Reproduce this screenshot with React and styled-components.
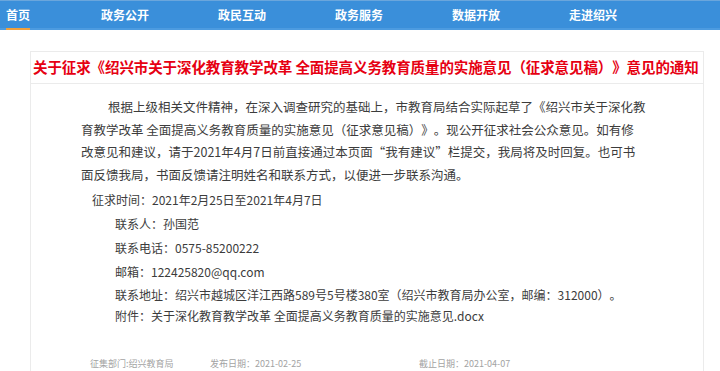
import React from 'react';
import styled, { createGlobalStyle } from 'styled-components';

const GlobalStyle = createGlobalStyle`
  html, body {
    margin: 0;
    padding: 0;
    background: #fff;
    overflow: hidden;
  }
  body {
    font-family: "Noto Sans CJK SC", "Noto Sans", sans-serif;
    text-spacing-trim: space-all;
  }
`;

const Nav = styled.nav`
  display: flex;
  height: 30px;
  padding-left: 6px;
  background: #3a8fda;
  border-top: 1px solid #6aa6dc;
  box-sizing: border-box;
  box-shadow: inset 0 -2px 0 #4c9be0;
`;

const NavItem = styled.div`
  width: ${(p) => p.$w}px;
  flex-shrink: 0;
  display: flex;
`;

const NavLabel = styled.span`
  color: #fff;
  font-size: 12px;
  font-weight: 700;
  line-height: 27px;
  border-bottom: 2px solid ${(p) => (p.$active ? '#f0a03c' : 'transparent')};
`;

const Card = styled.div`
  margin: 21px 0 0 30px;
  width: 674px;
  height: 340px;
  border: 1px solid #ebebeb;
  box-sizing: border-box;
`;

const Title = styled.h1`
  margin: 0;
  height: 31px;
  padding-left: 2px;
  border-bottom: 1px solid #ebebeb;
  color: #e60012;
  font-size: 14.5px;
  font-weight: 700;
  line-height: 30px;
  white-space: nowrap;
  letter-spacing: -0.1px;
`;

const Body = styled.div`
  padding: 12px 0 0 50px;
  color: #3c3c3c;
  font-size: 12.5px;
`;

const Para = styled.p`
  margin: 0;
  line-height: 22.5px;
  text-indent: 27px;
  white-space: nowrap;
`;

const Info = styled.div`
  padding-left: ${(p) => p.$indent}px;
  font-size: 12px;
  line-height: ${(p) => p.$lh}px;
  margin-top: ${(p) => p.$mt || 0}px;
  white-space: nowrap;
`;

const Meta = styled.div`
  display: flex;
  padding: 32px 0 0 59px;
  color: #a3a3a3;
  font-size: 9px;
`;

const MetaItem = styled.span`
  width: ${(p) => p.$w}px;
  flex-shrink: 0;
`;

const navs = [
  { label: '首页', w: 95, active: true },
  { label: '政务公开', w: 117 },
  { label: '政民互动', w: 117 },
  { label: '政务服务', w: 117 },
  { label: '数据开放', w: 117 },
  { label: '走进绍兴', w: 117 },
];

const lines = [
  '根据上级相关文件精神，在深入调查研究的基础上，市教育局结合实际起草了《绍兴市关于深化教',
  '育教学改革 全面提高义务教育质量的实施意见（征求意见稿）》。现公开征求社会公众意见。如有修',
  '改意见和建议，请于2021年4月7日前直接通过本页面“我有建议”栏提交，我局将及时回复。也可书',
  '面反馈我局，书面反馈请注明姓名和联系方式，以便进一步联系沟通。',
];

export default function App() {
  return (
    <>
      <GlobalStyle />
      <Nav>
        {navs.map((n) => (
          <NavItem key={n.label} $w={n.w}>
            <NavLabel $active={n.active}>{n.label}</NavLabel>
          </NavItem>
        ))}
      </Nav>
      <Card>
        <Title>关于征求《绍兴市关于深化教育教学改革 全面提高义务教育质量的实施意见（征求意见稿）》意见的通知</Title>
        <Body>
          <Para>
            {lines.map((l, i) => (
              <React.Fragment key={i}>
                {l}
                {i < lines.length - 1 && <br />}
              </React.Fragment>
            ))}
          </Para>
          <Info $indent={11} $lh={24} $mt={2}>征求时间：2021年2月25日至2021年4月7日</Info>
          <Info $indent={34} $lh={24}>联系人：孙国范</Info>
          <Info $indent={34} $lh={24}>联系电话：0575-85200222</Info>
          <Info $indent={34} $lh={24}>邮箱：122425820@qq.com</Info>
          <Info $indent={34} $lh={22}>联系地址：绍兴市越城区洋江西路589号5号楼380室（绍兴市教育局办公室，邮编：312000）。</Info>
          <Info $indent={34} $lh={19}>附件：关于深化教育教学改革 全面提高义务教育质量的实施意见.docx</Info>
        </Body>
        <Meta>
          <MetaItem $w={120}>征集部门:绍兴教育局</MetaItem>
          <MetaItem $w={209}>发布日期：2021-02-25</MetaItem>
          <MetaItem $w={120}>截止日期：2021-04-07</MetaItem>
        </Meta>
      </Card>
    </>
  );
}
